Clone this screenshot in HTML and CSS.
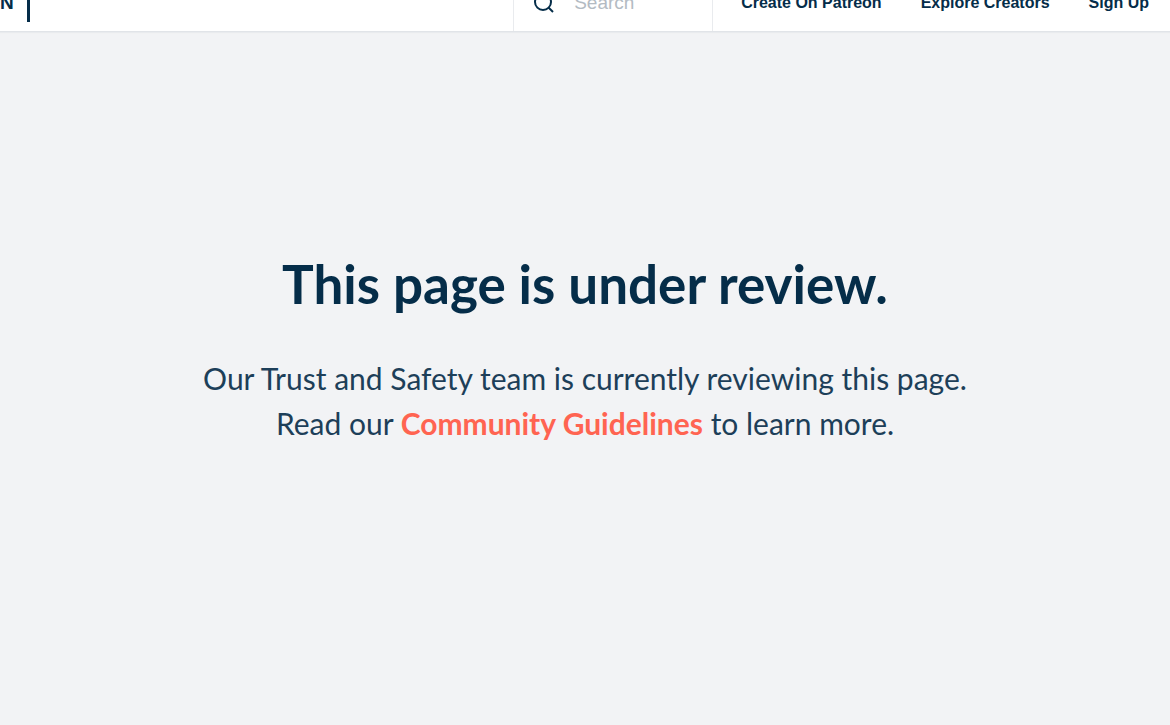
FILE: index.html
```html
<!DOCTYPE html>
<html lang="en">
<head>
  <meta charset="utf-8">
  <title>This page is under review</title>
  <link rel="stylesheet" href="styles.css">
</head>
<body>
  <header class="header">
    <div class="header-inner">
      <a href="#" class="logo">N</a>
      <form class="search">
        <label for="search" class="search-icon">
          <svg width="20" height="20" viewBox="0 0 20 20" fill="none" stroke="#052d49" stroke-width="2" aria-label="Search">
            <circle cx="9" cy="9" r="8" />
            <path d="M14.5 14.5 L19 19" />
          </svg>
        </label>
        <input type="text" id="search" placeholder="Search">
      </form>
      <nav class="nav">
        <a href="#">Create On Patreon</a>
        <a href="#">Explore Creators</a>
        <a href="#">Sign Up</a>
      </nav>
    </div>
  </header>

  <main class="container">
    <h1>This page is under review.</h1>
    <p>
      Our Trust and Safety team is currently reviewing this page.<br>
      Read our <a href="#">Community Guidelines</a> to learn more.
    </p>
  </main>
</body>
</html>
```
FILE: styles.css
```css
* {
  box-sizing: border-box;
}

body {
  font-family: Lato, sans-serif;
  background-color: #f2f3f5;
  color: #052d49;
  margin: 0;
}

/* only the lower half of the bar is in view */
.header {
  display: flex;
  align-items: flex-end;
  height: 32px;
  overflow: hidden;
  background-color: white;
  border-bottom: 1px solid #e1e4e8;
  box-shadow: 0 1px 1px #e9ebee;
}

.header-inner {
  flex: 1;
  display: flex;
  align-items: center;
  height: 56px;
  font-family: "Liberation Sans", Arial, sans-serif;
}

.logo {
  height: 38px;
  width: 30px;
  border-right: 3px solid #052d49;
  color: #052d49;
  font-size: 19px;
  font-weight: bold;
  line-height: 38px;
  text-decoration: none;
}

.search {
  display: flex;
  align-items: center;
  height: 100%;
  width: 200px;
  margin-left: auto;
  padding-left: 20px;
  border-left: 1px solid #e9ebee;
  border-right: 1px solid #e9ebee;
}

.search-icon {
  display: flex;
}

.search input {
  width: 120px;
  margin-left: 20px;
  padding: 0;
  border: none;
  outline: none;
  font-family: inherit;
  font-size: 19px;
}

.search input::placeholder {
  color: #b3bbc3;
}

.nav {
  display: flex;
  gap: 39px;
  padding: 0 21px 0 28px;
}

.nav a {
  color: #052d49;
  font-size: 16px;
  font-weight: bold;
  text-decoration: none;
  white-space: nowrap;
}

.container {
  padding: 220px 20px 40px;
  text-align: center;
}

h1 {
  margin: 0 0 40px;
  font-size: 53px;
  line-height: 64px;
}

p {
  margin: 0;
  color: #1d3f59;
  font-size: 30px;
  line-height: 45px;
}

p a {
  color: #ff6451;
  font-weight: bold;
  text-decoration: none;
}
```
